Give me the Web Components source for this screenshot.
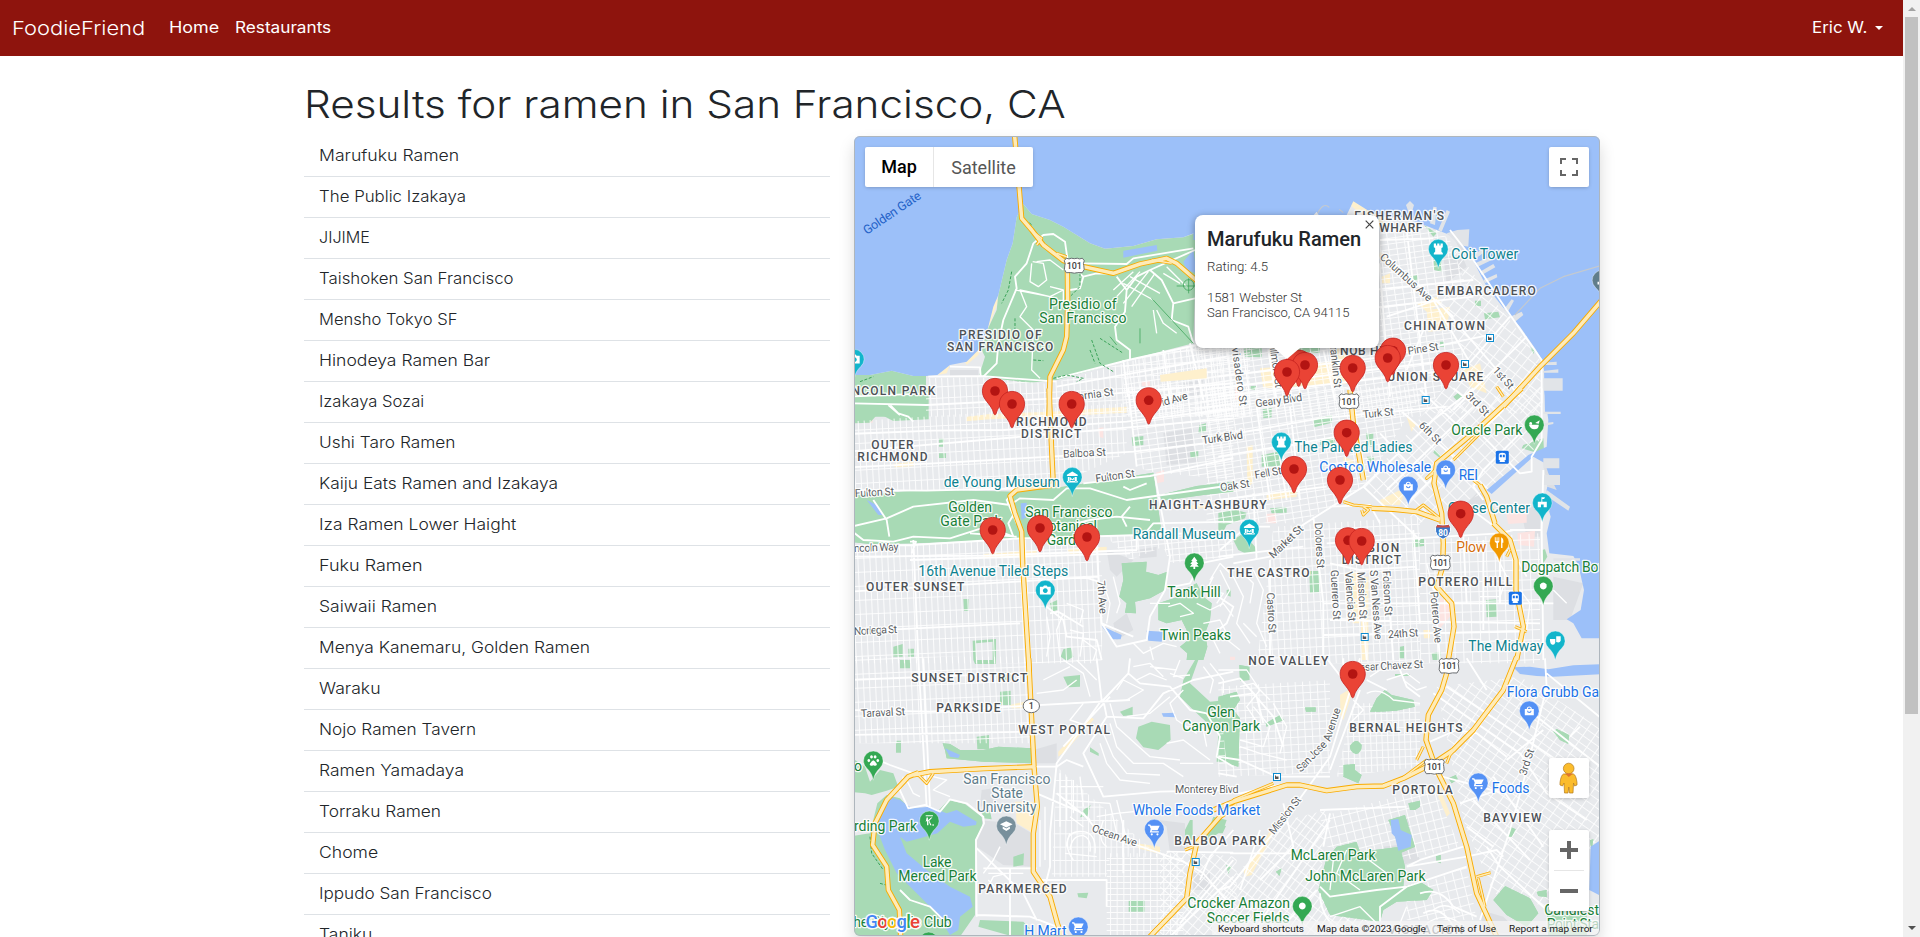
<!DOCTYPE html>
<html lang="en">
<head>
<meta charset="utf-8">
<title>FoodieFriend</title>
<style>
html,body{margin:0;height:937px;overflow:hidden;background:#fff}
body{font-family:Inter,"Open Sans",sans-serif;color:#212529}
</style>
</head>
<body>
<foodie-app></foodie-app>
<script>
const define=(n,c)=>customElements.define(n,c);
class Base extends HTMLElement{
  constructor(){super();this.attachShadow({mode:'open'});}
  paint(h){this.shadowRoot.innerHTML=h;}
}

/* Text stretched horizontally to a wanted advance width */
define('fit-text',class extends Base{
  connectedCallback(){
    this.paint(`<style>:host{display:inline-block;white-space:nowrap;width:${this.getAttribute('w')}px}span{display:inline-block;transform-origin:0 50%}</style><span><slot></slot></span>`);
    const s=this.shadowRoot.querySelector('span');
    const w=s.offsetWidth;
    if(w)s.style.transform=`scaleX(${(+this.getAttribute('w')/w).toFixed(4)})`;
  }
});

define('nav-bar',class extends Base{
  connectedCallback(){this.paint(`<style>
  :host{display:flex;height:56px;background:#8e140d;color:#fff;align-items:center;box-sizing:border-box;padding:0 20px 0 12px;font-size:15.4px;line-height:24px}
  .brand{font-size:19.3px;margin-right:24px;font-weight:350;line-height:30px}
  a{margin-right:16px;padding-bottom:1px}
  .user{margin-left:auto;display:flex;align-items:center;padding-bottom:1px}
  i{border:4.8px solid transparent;border-top-color:#fff;border-bottom:0;margin-left:8px}
  </style>
  <fit-text class="brand" w="133">FoodieFriend</fit-text><a><fit-text w="50">Home</fit-text></a><a><fit-text w="96">Restaurants</fit-text></a>
  <span class="user"><fit-text w="55">Eric W.</fit-text><i></i></span>`);}
});

define('result-row',class extends Base{
  connectedCallback(){this.paint(`<style>:host{display:block;height:24px;padding:8px 16px 8px 15.5px;border-bottom:1px solid #dee2e6;font-size:15.2px;line-height:24px;font-weight:300;color:#212529}</style><fit-text w="${this.getAttribute('w')}"><slot></slot></fit-text>`);}
});

define('result-list',class extends Base{
  connectedCallback(){
    const rows=[['Marufuku Ramen',140.5],['The Public Izakaya',147.5],['JIJIME',51],['Taishoken San Francisco',195],['Mensho Tokyo SF',138.5],['Hinodeya Ramen Bar',171],['Izakaya Sozai',105],['Ushi Taro Ramen',136.5],['Kaiju Eats Ramen and Izakaya',239.5],['Iza Ramen Lower Haight',197.5],['Fuku Ramen',103],['Saiwaii Ramen',117.5],['Menya Kanemaru, Golden Ramen',270.5],['Waraku',61.5],['Nojo Ramen Tavern',157.5],['Ramen Yamadaya',145],['Torraku Ramen',122],['Chome',59],['Ippudo San Francisco',172.5],['Taniku',53]];
    this.paint(`<style>:host{display:block}</style>`+rows.map(r=>`<result-row w="${r[1]}">${r[0]}</result-row>`).join(''));
  }
});

/* ---- city map ---- */
const TILES={A:[850,130],B:[1220,130],C:[850,390],D:[1220,390],E:[850,660],F:[1220,660]};
const px=(t,x)=>(TILES[t][0]+x/3).toFixed(1);
const py=(t,y)=>(TILES[t][1]+y/3).toFixed(1);
const layer=(cls,list)=>list.trim().split('\n').map(l=>{const t=l.trim()[0];return `<path class="${cls}" transform="translate(${TILES[t]}) scale(.33333)" d="${l.trim().slice(2)}"/>`}).join('');

const WATER=`
A M-5 -5H1200V330L1035 308L1000 322L920 328L850 348L765 356L720 340L640 290L600 270L545 252L520 222L500 262L488 340L470 390L445 495L430 530L410 610L385 660L350 695L300 705L262 735L228 738L190 738L125 722L60 735H-5Z
B M-80 -5H1150V850H975L972 720L968 692L945 655L900 590L865 552L800 470L760 392L715 335L690 315L612 285L550 262L500 262L455 248L400 214L380 255L300 262L290 245L240 300L-80 330Z
D M972 -5H1150V745H1085L1060 700L1040 688L1082 660L1092 600L1075 525L1060 498L988 490L980 430L992 380L975 320L982 290L1010 300L985 250L975 220L940 200L815 312L800 300L925 195L980 170L985 90Z
F M880 22L930 20L985 28L1060 16L1150 12V42L1000 50L950 48L900 42Z
F M1150 535L1112 560L1108 690L1150 712Z
F M512 480L535 477L542 510L575 525L572 560L535 572L525 530L515 520Z
E M115 410L150 420L185 445L240 440L290 460L320 450L380 485L378 495L340 500L300 485L262 520L210 535L170 545L150 530L170 580L230 630L300 680L360 710L368 740L330 770L325 810L300 825L260 760L200 700L140 640L105 570L82 510L80 460Z
C M755 708L815 735L812 748L785 748Z
C M890 722L940 725L935 755L895 752Z
C M512 340L530 338L528 382L515 390Z
C M50 330L80 345L98 375L85 375Z
A M820 362L920 345L922 362L820 383Z
A M1000 395L1030 360L1040 430L1010 420Z
E M935 160L975 158V172L940 170Z
E M285 265L330 285L325 294L300 290Z
`;
const GREEN=`
A M520 222L500 262L488 340L470 390L445 495L440 540L412 600L395 660L405 680L388 735L420 745L540 758L620 750L835 690L1030 640L1040 308L1000 322L920 328L850 348L765 356L720 340L640 290L600 270L545 252Z
A M-5 735H60L125 722L190 738L228 738V860H-5Z
C M-5 -5H236V88L130 93L85 70L60 98L15 100H-5Z
C M-5 315L240 300L480 305L640 290L910 248L935 430L880 432L500 447L190 460L60 462L-5 455Z
C M930 315L1040 288L1150 275V305L1060 315L935 332Z
C M815 520L890 515L888 545L925 555L952 545L945 600L900 625L855 635L858 670L825 668L830 640L808 620L820 570Z
C M925 640L985 620L1000 600L1040 580L1060 620L1085 640L1080 690L1065 730L1072 770L1060 810H1010L1012 790L990 770L1015 750L1010 720L995 690L950 700L925 690Z
C M340 627H356V663H342ZM267 146H282V170H267ZM267 190H288V204H267ZM845 142L880 138V165L848 168ZM1048 105L1068 100V125L1045 130ZM1020 186L1045 182V202L1022 204ZM368 752L438 747V810H428V755L378 760V810H370ZM130 770L158 762V800H130ZM175 776H192V800H175ZM640 778L662 772L670 800L650 812L632 800ZM600 640L622 630V660L605 665Z
E M278 250L300 252L330 270L400 270L445 260L545 265V310L400 305L290 295L285 270Z
E M380 230L417 225V268H382ZM150 0H180V25H150ZM370 0H438V12H375ZM450 40L482 35V60H450ZM450 95L482 92V135H450ZM138 242H153V278H138ZM640 50L690 45V80L655 82ZM810 155L848 140V165L820 168ZM865 200L905 185L960 195L962 240L925 270L880 262L858 235ZM720 262L746 280V288L720 275ZM700 450L722 435L712 468L690 472ZM1020 480H1028V540H1005V510ZM1090 470L1130 480L1120 510L1060 550ZM395 455L420 450L425 478L400 475ZM490 590L522 580L520 615L490 620ZM682 700L715 698L710 715L685 712ZM836 720H884V755H836ZM390 780L520 785L545 810L530 830H490L385 800Z
E M-5 300H15L45 320L60 365L90 330L130 340L145 380L110 392L65 405L45 400L-5 395Z
E M82 430L110 405L150 415L175 442L225 445L262 455L295 420L345 432L395 470L398 500L375 540V765L330 830H-5V530L60 520Z
E M1000 60L1035 0H1045L1020 70L1080 125L1130 120L1150 180V305H1100L1105 220L1030 150L990 110Z
B M640 370H665V425L642 420ZM765 512H783V528H765ZM792 550L835 545L840 562L795 568ZM572 438L592 436V452H572ZM930 650L945 660L940 672ZM70 655L125 652V682L75 680ZM92 768H108V780H92ZM660 635H672V650H660ZM220 655L300 652V668L220 670ZM612 285L650 310L640 320Z
D M128 58L155 54V82L130 85ZM125 195L175 185L188 228L125 230ZM700 20L715 8L728 20L714 35ZM645 178L665 198L660 205L640 188ZM280 88L335 75V98L282 112ZM910 165L970 145L972 180L950 188L905 175ZM268 543H298V607L270 608ZM578 450L612 446V468L580 472ZM798 630L830 628V680L800 682ZM40 450L70 430L105 470L112 485L80 492L55 480ZM540 770L552 768V805H537ZM20 600L32 598V620L20 615ZM150 355L200 352V368L155 370ZM438 130H460V170H442ZM440 200H462V240ZM-5 368L40 358L80 368L75 385L20 405L5 435H-5ZM300 150L345 145V165H300ZM635 790L662 785V810H638ZM965 480L975 478L982 500L970 520Z
F M450 155L470 115L495 90L515 105L580 120L585 140L530 152L480 155ZM370 315L405 312V330L425 345L415 370L370 350ZM390 258Q408 230 425 255Q425 280 408 282Q390 278 390 258ZM1000 215L1010 207L1048 225L1045 252L1020 240ZM58 15L88 20V60L60 62ZM-5 110L50 95L60 120L40 150L60 175L55 320L20 310L10 220L-5 210ZM137 190L180 165L192 180L140 200ZM255 142H287V155H258ZM505 480L555 465L585 560L540 580L530 540ZM565 430L600 422V440L585 450H570ZM685 355L708 345L713 358L695 370ZM870 500L887 508L875 530H865ZM648 588L662 585V610L650 605ZM168 635L185 625L178 648Z
F M318 600L350 560L410 545L420 575L505 565L540 560L555 620L550 680L600 665L640 690L620 720L530 725L490 750L480 785L330 765L295 690ZM855 678L930 715L955 760L920 800L860 765L820 720ZM950 695L980 690V712L955 708ZM980 740L1100 760V830H985ZM1110 540L1120 538L1115 580ZM525 42H570V47H525Z
F M-5 495L18 498L8 520H-5ZM18 615L35 620L25 642Z
`;
const BUILT=`
A M670 312L700 318L765 352L840 342L920 320L985 320V332L850 356L765 362L730 350ZM435 505L445 512L385 675L350 705L345 695L380 660ZM262 735L300 705L290 730Z
C M350 80L420 72L600 65L830 50V68L600 80L420 88L348 94ZM400 492L560 482V495L400 505ZM650 478L770 470V485L660 492ZM130 222L190 215V228L135 232ZM1000 348L1100 340V352L1000 358Z
E M495 425H550V520L500 490ZM480 135L522 125L520 145H485ZM625 275L722 170L732 178L650 270L625 290ZM860 550L930 560V582L865 565ZM15 640L40 760L38 830H28L14 720Z
B M620 540L690 530L680 600L625 605ZM480 365L540 420L530 430L478 385ZM360 200L455 225L500 290L470 290ZM485 440L510 430V460H485ZM590 520L650 500L665 520L620 545ZM120 715L400 690V760L130 775ZM340 655H392V760H345ZM730 720L780 700L800 790L750 770Z
D M480 330L560 290L540 345L485 345ZM140 310L230 300V320L140 330ZM395 545H420V700H398ZM420 560H445V810H425ZM560 80L590 100L575 125ZM80 170L98 165V280L82 290ZM370 200L400 210V250H372ZM610 720H630V745H612Z
F M360 105L385 90L395 105L370 180L362 170ZM70 630L120 570L150 510L160 520L95 645L75 650ZM655 375L690 460L680 470L655 410Z
`;
const PINK=`
C M-5 40H68V98L-5 100ZM745 115L760 112V145L748 140ZM918 248L942 240V275L922 280Z
D M138 372L168 370V400H140ZM855 355L920 340V398L865 402ZM892 430L945 422L942 470L895 465ZM660 620L690 645V680L655 720ZM30 800H45V810H30Z
B M45 770L70 765V810H45Z
A M875 755L900 753V768H875Z
`;
const GREY=`
A M1000 760L1060 750L1045 800L1010 795ZM300 720H385V740H300Z
C M940 130L1030 115V170L1045 215L950 225ZM790 700L830 670L850 720L800 750ZM860 480L920 470V500L870 505ZM770 480L850 510L800 560L780 540Z
E M380 480L495 490L545 520V620L460 615L380 560ZM395 390L430 385V430L390 440ZM925 480L1005 490V580H960L950 500ZM550 270L620 250V310H555ZM1030 640H1080V690H1030Z
B M690 300L745 298V370L720 360ZM670 380L725 375L740 410L680 460ZM985 745H1028V780H985ZM975 700L1015 695V712L975 715ZM640 250L680 290L640 300ZM560 215L580 215L578 250H565ZM415 215L470 260L440 260Z
D M740 340L790 290L800 340L775 365ZM900 350L960 340V440L920 440ZM1000 560L1090 580L1050 690H1000ZM970 220L1020 200V310L985 310Z
F M520 490L560 470L575 500L530 520ZM490 560L580 550L600 600L530 620ZM780 750L850 770L900 820H790Z
`;
const PIERS=`
B M630 280L640 230L650 232L645 285ZM655 300L680 240L690 245L665 305ZM680 310L712 300L748 298L745 350L718 345ZM750 380L800 350L805 358L758 392ZM765 400L810 380L815 390L770 412ZM780 425L820 402L826 412L785 435ZM790 450L830 432L832 442L795 460ZM850 540L875 508L882 512L862 548ZM870 560L905 545L910 555L885 575ZM945 700L1010 695V705H950ZM950 725L1015 718V728H955ZM970 745H1028V782H972ZM558 225L570 213L582 225L576 245H565Z
D M970 65H1022V72H970ZM970 100L1000 96V102L970 108ZM980 300L1050 350L1045 362L975 315ZM975 330L990 360L982 370ZM970 205H1018V235H970ZM970 255H1020V285H970ZM1000 505H1080V512H1000Z
`;
/* secondary streets: white polylines */
const STREETS=`
A M550 340L530 400L495 440L500 475L460 570L445 640L440 700L400 740M550 340L580 315L610 312L645 335L650 370L655 400M655 400L700 440L690 475L660 480M700 440L740 430L800 432M690 400L830 402L850 385L1030 355M800 440L830 480L825 545L795 590L800 630L840 660V690M830 480L860 440L900 420L1035 360M900 420L935 450L970 520L965 570L1015 590L1030 640M970 520L1035 505
A M620 745L835 690L1040 645M620 770L1130 680M820 690L833 800M1020 640L1060 810M940 660L960 810M-5 800L235 790M235 740L390 738L620 755M300 710L390 712L392 738
C M-5 132L250 122L460 120L830 95L1150 55M-5 40L230 45L620 25L1150 -20M-5 232L250 220L600 200L850 185L1150 150M-5 300L230 302L500 295M700 280L900 258L1150 205M-5 412L110 385L190 350L370 330L480 345L510 325L610 330L650 295L720 295L830 330L1150 285M-5 415L40 450L130 455L190 440L300 445L410 410L490 440M-5 468L190 465L510 445L880 435L1150 425M190 450L205 810M-5 500L400 497L860 480L860 435M-5 605L240 590L500 575L745 560L740 460M835 -5L860 230M120 45L145 70L175 80L190 95M240 590L500 575M-5 725L510 700M745 560L755 700L800 770L890 750L900 680L945 600L960 500L915 260M755 700L850 740M880 435L910 400L1150 395M180 510L840 490M1150 500L1050 520L1020 580L970 590M500 295L470 330L500 400M180 455H198L185 490M700 560L760 580M115 45L150 75M360 430L500 440M590 650L640 690L650 740L740 750L755 810M-5 185L1150 85
C M490 375L475 400L490 440M540 395L600 420L720 390L800 380L900 390M840 350L815 380L830 410M70 330L110 390L118 440M890 280L840 300L820 290M600 670L625 665L700 710
E M-5 150L240 155L480 140L840 120M-5 60L500 40M205 -5L230 440M220 -5L240 440M60 290L120 315L190 340L240 330M145 380L175 445L225 435L270 455L300 418L350 430L400 470L402 490L378 540L380 770M740 -5L755 120L620 310L600 520L600 620L580 700M840 -5L835 40L760 120L770 170L880 175L940 100L1030 60L1150 35M555 320H620L650 300L700 320M560 400L700 460L740 510L860 555L1000 605L1060 640L1150 745M620 400L720 480M770 170L700 280L760 410L930 395L1150 390M380 565L520 700L560 780M950 575L1150 578M1150 510L1080 590L1050 660M380 765L540 770L620 800M150 690L180 720L240 740L300 800M835 40L870 70L960 80L1020 150L1070 160L1110 230L1100 290L1150 320M400 625H560M-5 225L530 215M640 260L780 110M560 660H770V740M480 625V830M820 480V640M990 790L1150 600M960 830L1150 650
B M485 365L700 560M500 560L650 510L900 800M350 490L760 450M-5 740L500 680L830 610M-5 775L700 690M480 330L640 325M400 540L760 500M640 510L745 690M690 300L760 390L860 540L965 690V820M478 400L510 800M560 300L620 800M310 660L345 810M145 660L170 810M-5 800L700 720M870 560L730 720M920 620L700 840M965 700L830 850M610 600L560 720
D M965 -5V150L935 200V245L900 250L790 140M430 290L640 90L760 -5M430 290L240 410L150 500M430 290L600 450M620 280L480 130M700 200L540 60M760 150L600 0M820 90L700 -5M560 340L850 60M500 300L760 50M330 350L450 345L480 400M-5 140L300 85L680 50M-5 200L410 130M110 50L150 330M-5 330L320 290M280 380L310 640V810M-5 500L250 470M0 480L80 410L150 410M40 520L150 500L230 420M150 510V810M100 310L110 510M320 460L840 430L880 420M330 520L420 540L590 530M310 640L1000 640M330 690L960 700M420 580L440 810M500 540L520 810M580 420L600 700M870 420H965L970 240M965 420L970 810M965 570L990 600M770 370L850 430L920 560M790 330L760 290L790 240L900 130M-5 620L40 650L20 700L-5 720M310 735L900 725M640 560L660 810M730 440L740 640M790 450V720M840 440V640M170 140L200 330M210 50L240 330
F M420 -5L400 60L330 290L280 360L200 470L30 680L-5 690M420 90L330 330M-5 70L60 55L110 110L130 190M30 110L100 100L160 170L190 260M-5 290L60 300L170 350L330 350M-5 380L60 400L180 375M300 450L560 440M330 460L310 560M560 620L740 590L830 570L850 590M480 785V740L560 680L740 620M740 -5L800 90M630 245L710 210L770 220L860 290M975 -5L980 80L920 330L870 510L780 780M640 100L900 280L980 400L1100 480M680 80L1100 360M900 130L1140 320M820 350L970 560M760 420L930 600M740 500L820 560M540 30L560 80L600 110M300 680L330 710L470 690L560 680M90 830L330 480M160 830L290 690M30 580L220 580M120 510L60 690M190 430L220 560L120 660M560 620L600 600L730 560M320 -5L370 60M370 -5V70M-5 340L50 350M440 60L500 90M980 40L1150 180M1050 230L1080 200M860 300L970 210M630 340L780 380L850 400M720 430L860 380M300 700Q300 780 380 830M800 560L840 620L980 750M600 700Q660 680 700 740L770 770M610 760Q660 730 700 800
`;
const CURVES=`
A M545 400L540 455L565 470L590 450L580 400L548 395M495 480L600 500L640 520M640 480L600 500L560 490L510 480L530 530L510 560L550 600L545 720L570 745M560 395L600 390L640 420M600 470L640 480L640 520M790 480L850 425M800 500L870 425M820 520L895 425M845 530L915 430M840 440L930 490M820 460L910 510M940 430L990 460M950 410L1010 470M910 540L920 610M920 540L940 580L980 610
C M760 580L780 640L770 700M790 560L810 640L800 670M960 640L900 640M955 650L990 640L1030 670L990 680M1040 640L1080 660L1120 640L1150 680M1060 700L1110 690L1130 730M1090 560L1070 600L1120 610L1100 640M1110 520L1080 570M640 670L620 720L630 800M660 720L700 730L690 800M700 750L740 780L730 810M590 680L600 740L590 800M850 760L880 790L940 760L980 770M900 770L910 810M1090 750L1110 790M650 640L700 660L690 700
E M640 0L700 40L720 110M680 0L740 60M850 20L900 10L940 50M860 60L900 40L950 60M780 130L800 200L900 290L990 300M780 190L800 260L850 310L940 310L1000 350M760 220L790 290L830 340L930 345M750 250L770 310L810 360L900 370M950 250L1000 240L1080 300M1010 200L1060 210L1070 260M990 310L1090 310M700 130L660 180L720 200M650 560Q650 510 700 515Q740 520 735 580M660 570Q665 525 700 527Q725 535 720 575M645 580L740 590M660 470L700 500M900 20L980 30M990 0L970 50L1020 45M1060 20L1090 60L1080 100M1080 10L1120 60L1120 100M415 640H520M415 660L450 700L540 690M410 690L430 650L470 640M450 560L430 600L400 640M170 360L190 400L210 410M250 350L290 360L250 390L300 410M160 350L150 390M960 110L900 160L830 170M1000 90L960 130L980 180L1040 220M800 90L820 60L880 90L830 120M560 100L640 90L680 60M580 60L660 20M960 40L1000 55
E M630 340V500M650 350V480M670 360V460M690 350L700 440M630 380L760 380M640 420L780 430M780 430L800 520M800 420L830 540M740 470L800 460L900 450M670 600Q640 560 660 520M760 480Q740 540 770 560M570 480V620M585 440V600
F M-5 30L80 30L120 90L80 140L120 200L60 210M60 80L100 70L150 120M100 140L150 200L130 260L60 240M160 130L200 200L180 280M60 260L120 280L200 300M440 100Q480 80 520 120L600 130M400 120L430 150L390 190M500 60L560 40L600 70M450 50L480 30L530 20M550 60L590 90L620 80M330 770L420 740L470 790M640 750Q680 720 720 760M620 790Q680 750 730 800M560 740L540 790L580 820M340 600L330 690M380 570L350 640L420 690M420 580L500 640
D M0 520L40 560L70 620L50 700L90 760M60 540L100 580L90 640M100 540L130 600L110 700L140 770M10 740L60 780M70 700L110 740M0 540L30 600L0 650M620 520L640 600M830 500L860 560L840 620L780 620M900 600L930 640L920 720M1000 600L1040 640
`;
/* street grids: polygon area, angle, step across, step down */
const GRIDS=[
['A','M228 745L385 742L600 762L835 695L1030 650L1200 640V860H228Z',-3,18,34],
['A','M820 695L1040 645H1200V860H820Z',-9,23,18],
['B','M-60 655H480V300L640 290L690 330L740 470L640 510L740 690L600 860H-60Z',-8,25,17],
['B','M690 340L965 695V850H610L745 690L650 510L740 470Z',38,28,30],
['D','M-40 -10H620L430 290L330 350L240 400H-40Z',-9,26,18],
['C','M-5 95L830 40V190L620 285L480 300L-5 305Z',-3,18,40],
['C','M835 -10H1150V270L900 245L860 230Z',-8,27,18],
['C','M-5 470L745 440L760 600L755 820H-5Z',-2.5,18,42],
['C','M770 440L1150 420V500L960 520L940 470L840 510Z',-5,20,18],
['E','M-5 -10H545V250H-5Z',-2.5,18,42],
['D','M620 60L960 -10V150L920 210L790 310L700 350L600 400L430 290Z',45,32,30],
['D','M160 410L600 380V820H110L150 510Z',-3,19,27],
['D','M600 450L960 430V820H600Z',-2,26,30],
['F','M400 130L600 130V320L350 350Z',-2,17,22],
['F','M300 470L640 380L720 560L560 600L320 560Z',-14,24,27],
['F','M-5 700L200 480L320 450L300 690L480 800L330 840H-5Z',37,18,30],
['F','M650 80L900 50L1140 200V530L980 740L820 700L730 480Z',35,30,22],
['E','M620 320L930 590H780L770 650H605Z',0,17,40],
['E','M930 570L1160 590V840H930Z',40,22,26],
['F','M-5 80L330 60V340L-5 350Z',-3,22,22],
['E','M770 580H1000V830H770Z',0,20,18],
['F','M560 690L740 620L770 780H560Z',-14,26,27]
];
const HWY=`
A M492 -5L508 180L515 265L545 300L580 345L640 392L700 410L790 430L870 402L950 385L980 400L1040 452
A M652 405L653 520L650 620L640 660L600 740L597 860
C M597 -5L605 180L610 285L500 300L480 318L495 370L515 425L518 520L538 850
E M536 -5L552 320L562 440L550 520V635L600 710L622 790L640 840
E M190 345L240 335L400 326L555 320M205 338L175 350L110 420L75 490L68 555L110 620L115 690L148 750L152 830
E M895 835L1010 715L1020 640L1040 550L1110 470L1160 435
F M-20 450L40 425L120 400L200 375L240 375L320 392L410 380L490 378L550 355L640 310L700 270L760 210L850 90L890 -10
F M683 30L665 90L625 165L618 240L650 330L700 430L740 560L770 700L830 830
B M1150 505L1060 610L960 710L850 830
D M905 -5L770 120L650 220L642 280L665 370L670 460L668 530L650 590L695 640L702 710L685 810
D M455 355L520 358L590 365L660 390M820 400L870 450L888 510V600L910 710L890 810
D M390 0L400 100L430 270M780 285L800 320L825 400
`;
const HWY2=`
A M555 310L575 325L560 345M620 370L650 380M905 390L965 400
D M430 350L445 360L430 375L425 360M590 360L610 345L660 385M370 335L400 345L455 350M660 225L620 265L640 250M700 210L780 130M870 480L860 500M885 710L920 725M760 270L785 290
E M205 345L230 370L250 340M1005 570L1030 560M905 820L1000 725
F M40 420L160 370M520 375L620 300M680 310L690 285L740 230M610 260L590 300M770 650L812 638M775 655L795 740M860 60L850 95L800 160
B M850 800L830 770M870 810L900 770
`;
const TRAILS=`
A M690 430V470L660 500M485 425L475 480L455 520M495 565V600M550 690L580 692M610 745L650 735L700 745L680 755M750 625L820 670M720 660L735 700M545 285L535 275M30 755L70 740M725 630L750 700L790 725
E M60 530L65 580L100 630M90 670L108 675L110 645
`;
const POI={
 castle:'M-5-6h2.5v2h1.3v-2h2.4v2h1.3v-2H5v4l-1.5 1V3l1.5 1.5V6H-5V4.500L-3.500 3V-1L-5-2Z',
 museum:'M0-6L6-2.500V-1H-6V-2.500ZM-5 0h2v5h-2ZM3 0h2v5h-2ZM-6 4.500H6V6H-6ZM-2.500 0L0 2.500L2.500 0V4h-1V2.500L0 4L-1.500 2.500V4h-1Z',
 camera:'M-6-3.500h3.500l1-1.500h3l1 1.500H6V5H-6ZM0-2a2.700 2.700 0 1 0 .01 0Z',
 tree:'M0-6.500L3.500-2H2L4.500 1.500H2.500L5 4.500H1V7H-1V4.500H-5L-2.500 1.500H-4.500L-2-2H-3.500Z',
 bag:'M-5-2h2.200a2.800 2.800 0 0 1 5.600 0H5V5H-5ZM-1.500-2h3a1.500 1.500 0 0 0-3 0ZM-2.500 0a2.500 2.500 0 0 0 5 0h-1.200a1.300 1.300 0 0 1-2.600 0Z',
 cart:'M-7-5h2.500l.7 1.500H6L3.600 1.500H-2.500L-3 2.600H5V4H-5L-4-.2-5.500-3.600H-7ZM-2.800 4.700a1.200 1.200 0 1 0 .01 0ZM3.500 4.700a1.200 1.200 0 1 0 .01 0Z',
 fork:'M-5-6h1v4h1v-4h1v4h1v-4h1v5l-1.500 1.500V6h-1.500V.5L-5-1ZM2 6V-6Q5-5 4.500 0H3.500V6Z',
 paw:'M-5-2a1.500 1.800 0 1 0 .01 0ZM-2-6a1.500 1.800 0 1 0 .01 0ZM2-6a1.500 1.800 0 1 0 .01 0ZM5-2a1.500 1.800 0 1 0 .01 0ZM0-.5Q2 0 4 4Q4 6.500 0 5Q-4 6.500-4 4Q-2 0 0-.5Z',
 dot:'M0-3.800A3.800 3.800 0 1 1-.01-3.800Z',
 golf:'M-4-6H4v1H-4ZM-3-3.500H-1.500V-.5L2-3.500H3.500L0 0L2.500 5H1L-1-.5V5H-2.500V0L-4 1.500ZM3.500 4H5V5.500H3.500Z',
 arena:'M-5-1H-1V-6H3L2-4H0V-1H5V5H1.500V2H-1.500V5H-5Z',
 cap:'M0-5L7-1.500L0 2L-7-1.500ZM-4 1L0 3L4 1V3.500L0 6L-4 3.500Z',
 mask:'M-6-2H0V2Q-1 5-3 4.500Q-6 4-6-2ZM1-5H6V0Q5 3 1 1.500Z',
 ball:'M-6 0H5Q5 5 0 5Q-4 5-6 0ZM-4-3a1.600 1.600 0 1 0 .01 0ZM1-2L6-5L5-1Z',
 stack:'M-5 5V2H-3V-5H-1V2H5V5Z'
};
const PLACES=[['B',655,357,'#12b5cb','castle'],['D',184,156,'#12b5cb','castle'],['C',667,261,'#12b5cb','museum'],['D',88,417,'#12b5cb','museum'],['C',586,600,'#12b5cb','camera'],['A',13,687,'#12b5cb','camera'],['C',1033,518,'#34a853','tree'],['D',565,288,'#5491f5','bag'],['D',677,239,'#5491f5','bag'],['D',943,104,'#34a853','ball'],['D',967,338,'#12b5cb','arena'],['D',838,458,'#f29900','fork'],['D',970,588,'#34a853','dot'],['D',1006,752,'#12b5cb','mask'],['F',928,152,'#5491f5','bag'],['F',775,368,'#5491f5','cart'],['F',247,738,'#34a853','dot'],['E',70,302,'#34a853','paw'],['E',238,482,'#34a853','golf'],['E',469,497,'#78909c','cap'],['E',913,507,'#5491f5','cart'],['E',685,800,'#5491f5','cart'],['E',236,845,'#34a853','golf'],['B',1146,450,'#607d8b','stack']];
/* tile, x start, baseline, x end (y end when the last flag is set), class, text, rotation */
const LABELS=[
['A',50,315,216,'w','Golden Gate',-34],
['A',597,536,800,'g','Presidio of'],['A',568,578,830,'g','San Francisco'],
['A',327,627,575,'n','PRESIDIO OF'],['A',291,663,610,'n','SAN FRANCISCO'],['A',-10,795,256,'n','INCOLN PARK'],
['B',403,270,672,'n','FISHERMAN\'S'],['B',478,306,607,'n','WHARF'],['B',651,496,947,'n','EMBARCADERO'],['B',552,601,795,'n','CHINATOWN'],['B',360,675,530,'n','NOB HILL'],['B',502,753,790,'n','UNION SQUARE'],
['B',694,387,895,'t','Coit Tower'],
['B',478,384,625,'s','Columbus Ave',42],['B',565,674,657,'s','Pine St',-9],['B',816,722,868,'s','1st St',48],['B',735,798,795,'s','3rd St',46],['B',34,645,830,'s','ivisadero St',82,1],['B',150,655,775,'s','illmore St',82,1],['B',330,650,775,'s','ranklin St',84,1],
['D',108,52,248,'s','Geary Blvd',-8],['D',430,85,522,'s','Turk St',-6],['D',595,108,652,'s','6th St',45],['D',-6,152,70,'s','k Blvd',-8],['D',106,266,186,'s','Fell St',-10],['D',2,303,90,'s','Oak St',-8],
['C',675,32,792,'s','fornia St',-8],['C',938,48,1015,'s','id Ave',-15],['C',1058,162,1180,'s','Turk Blvd',-8],['C',640,203,768,'s','Balboa St',-3],['C',738,277,856,'s','Fulton St',-8],['C',15,321,133,'s','Fulton St',-3],['C',12,486,146,'s','ncoln Way',-2],['C',12,735,142,'s','Noriega St',-3],['C',742,572,672,'s','7th Ave',86,1],
['E',33,172,166,'s','Taraval St',-3],['E',724,514,857,'s','Ocean Ave',19],['E',975,400,1166,'s','Monterey Blvd'],
['C',498,108,710,'n','RICHMOND'],['C',513,144,694,'n','DISTRICT'],['C',64,176,191,'n','OUTER'],['C',22,213,233,'n','RICHMOND'],['C',48,603,343,'n','OUTER SUNSET'],['C',897,357,1250,'n','HAIGHT-ASHBURY'],
['C',281,290,629,'t','de Young Museum'],['C',295,365,426,'g','Golden'],['C',271,407,455,'g','Gate Park'],['C',526,380,788,'g','San Francisco'],['C',570,422,741,'g','Botanical'],['C',590,464,722,'g','Garden'],['C',205,557,655,'t','16th Avenue Tiled Steps'],['C',848,446,1157,'t','Randall Museum'],['C',952,620,1112,'g','Tank Hill'],['C',930,749,1143,'g','Twin Peaks'],
['D',223,185,578,'t','The Painted Ladies'],['D',298,246,634,'b','Costco Wholesale'],['D',716,269,774,'b','REI'],['D',694,134,907,'g','Oracle Park'],['D',683,368,930,'t','Chase Center'],['D',709,487,799,'o','Plow'],['D',904,545,1190,'g','Dogpatch Bould'],['D',745,782,970,'t','The Midway'],
['D',366,486,538,'n','MISSION'],['D',365,522,543,'n','DISTRICT'],['D',22,561,269,'n','THE CASTRO'],['D',595,588,877,'n','POTRERO HILL'],
['D',160,507,252,'s','Market St',-44],['D',284,398,536,'s','Dolores St',87,1],['D',332,540,690,'s','Guerrero St',87,1],['D',375,545,695,'s','Valencia St',86,1],['D',412,546,688,'s','Mission St',87,1],['D',450,541,750,'s','S Van Ness Ave',86,1],['D',488,542,678,'s','Folsom St',87,1],['D',631,605,760,'s','Potrero Ave',85,1],['D',140,608,730,'s','Castro St',87,1],['D',505,745,596,'s','24th St',-4],
['F',85,15,325,'n','NOE VALLEY'],['F',420,33,610,'s','esar Chavez St',-3],['F',388,216,728,'n','BERNAL HEIGHTS'],['F',517,402,698,'n','PORTOLA'],['F',790,486,965,'n','BAYVIEW'],['F',505,822,730,'n','VISITACION'],
['F',860,111,1137,'b','Flora Grubb Ga'],['F',815,399,928,'b','Foods'],['F',212,599,467,'g','McLaren Park'],['F',256,663,617,'g','John McLaren Park'],['F',973,765,1137,'g','Candlest'],['F',980,806,1137,'g','Point Sta'],
['F',242,338,322,'s','San Jose',-46],['F',330,246,362,'s','Avenue',-72],['F',162,526,245,'s','Mission St',-52],['F',918,348,943,'s','3rd St',-72],
['E',184,66,532,'n','SUNSET DISTRICT'],['E',259,156,452,'n','PARKSIDE'],['E',505,222,780,'n','WEST PORTAL'],['E',973,555,1247,'n','BALBOA PARK'],['E',385,699,650,'n','PARKMERCED'],
['E',1072,171,1155,'g','Glen'],['E',997,213,1230,'g','Canyon Park'],['E',340,372,602,'u','San Francisco'],['E',424,414,519,'u','State'],['E',380,456,560,'u','University'],['E',848,464,1231,'b','Whole Foods Market'],['E',12,512,201,'g','rding Park'],['E',218,620,304,'g','Lake'],['E',145,662,380,'g','Merced Park'],['E',10,802,305,'g','he Olympic Club'],['E',12,334,33,'g','o'],['E',523,829,650,'b','H Mart'],['E',1012,745,1320,'g','Crocker Amazon'],['E',1070,789,1318,'g','Soccer Fields']
];
const PINS=[['C',435,3],['C',486,42],['C',665,42],['C',896,31],['C',428,420],['C',570,414],['C',711,441],['B',236,698],['B',255,705],['B',201,726],['B',398,714],['B',519,662],['B',503,684],['B',678,705],['D',380,128],['D',222,237],['D',360,270],['D',722,371],['D',384,451],['D',425,453],['F',398,42]];

define('city-map',class extends Base{
  connectedCallback(){
    const pats=GRIDS.map((g,i)=>`<pattern id="p${i}" width="${g[3]}" height="${g[4]}" patternUnits="userSpaceOnUse" patternTransform="rotate(${g[2]})"><path d="M0 1.500H${g[3]}M1.500 0V${g[4]}" stroke="#fff" stroke-width="3" stroke-opacity=".85" fill="none"/></pattern>`).join('');
    const grids=GRIDS.map((g,i)=>`<path transform="translate(${TILES[g[0]]}) scale(.33333)" d="${g[1]}" fill="url(#p${i})"/>`).join('');
    const places=PLACES.map(p=>`<g transform="translate(${px(p[0],p[1])} ${py(p[0],p[2])})"><path d="M0 19.500C-1 14-3 11-6.500 7.500A9.800 9.800 0 1 1 6.500 7.500C3 11 1 14 0 19.500Z" fill="${p[3]}" stroke="#fff" stroke-opacity=".45" stroke-width=".8"/><path d="${POI[p[4]]}" fill="#fff" fill-rule="evenodd" transform="scale(.9)"/></g>`).join('');
    const labels=LABELS.map(([t,x0,y0,end,cls,str,rot=0,down])=>{
      const len=down?(end-y0)/3:(end-x0)/3/Math.cos(rot*Math.PI/180);
      const x=px(t,x0),y=py(t,y0);
      return `<text class="${cls}" x="${x}" y="${y}" textLength="${len.toFixed(1)}"${rot?` transform="rotate(${rot} ${x} ${y})"`:''}>${str}</text>`}).join('');
    const shield=(t,x,y)=>`<g transform="translate(${px(t,x)} ${py(t,y)})"><path d="M-8-7.500Q-5-6-3-7.500Q0-6.500 3-7.500Q5-6 8-7.500L10-5Q8.500-2 9.500 0Q11 4 8 7Q3 6.500 0 7.500Q-3 6.500-8 7Q-11 4-9.500 0Q-8.500-2-10-5Z" fill="#fff" stroke="#6b6f73" stroke-width="1"/><text class="r" y="3.400" text-anchor="middle">101</text></g>`;
    const transit=(t,x,y)=>`<g transform="translate(${px(t,x)} ${py(t,y)})"><rect x="-3.500" y="-3.500" width="7" height="7" fill="#fff" stroke="#0a8bd0"/><path d="M-2-1.500h1v1h2.500v2.500H-2Z" fill="#555"/></g>`;
    const train=(t,x,y)=>`<g transform="translate(${px(t,x)} ${py(t,y)})"><rect x="-6.500" y="-6.500" width="13" height="13" rx="1.500" fill="#1a73e8"/><path d="M-3.500-2.500Q-3.500-4.500 0-4.500Q3.500-4.500 3.500-2.500V2.500L2 3.500L3 4.800H-3L-2 3.500L-3.500 2.500ZM-2.500-2.500V0H-.5V-2.500ZM.5-2.500V0H2.500V-2.500Z" fill="#fff" fill-rule="evenodd"/></g>`;
    const pins=PINS.map(p=>`<g transform="translate(${(+px(p[0],p[1])-13).toFixed(1)} ${(+py(p[0],p[2])-13).toFixed(1)})"><path d="M13 .4C5.800.4.400 5.900.400 12.900C.400 20.500 5.600 23.400 9.500 30C12 34.300 11.400 36.700 13 36.700S14 34.200 16.400 30.100C20 23.800 25.600 20.600 25.600 12.900C25.600 5.900 20.200.4 13 .4Z" fill="#ea4335" stroke="#c5221f" stroke-width=".8"/><circle cx="13" cy="13" r="4.800" fill="#b31412"/></g>`).join('');
    this.paint(`<style>
    :host{display:block;position:relative;height:800px;box-sizing:border-box;border-radius:6px;overflow:hidden;background:#e8eaed;font-family:Roboto,sans-serif}
    :host::after{content:"";position:absolute;inset:0;border:1px solid #aeb6bd;border-radius:6px;pointer-events:none}
    svg{display:block}
    .water{fill:#9cc0f9}.green{fill:#a8dab5}.built{fill:#fef0cd}.pink{fill:#fce4e2}.grey{fill:#dadce0;opacity:.8}.pier{fill:#e1e4e8}
    .st,.cv,.h1,.h2,.k1,.k2,.tr,.rail{fill:none;stroke-linejoin:round;stroke-linecap:butt}
    .st{stroke:#fff;stroke-width:5.500}.cv{stroke:#fff;stroke-width:4}
    .h1{stroke:#f9ab00;stroke-width:16}.h2{stroke:#feebb8;stroke-width:10.500}
    .k1{stroke:#f9ab00;stroke-width:9}.k2{stroke:#feebb8;stroke-width:4.500}
    .tr{stroke:#2b9a4b;stroke-width:2.600;stroke-dasharray:9 5}
    .path{fill:none;stroke:#3fa65c;stroke-width:2.400}
    .rail{stroke:#c4c9cf;stroke-width:3.500}
    text{font-family:Roboto,sans-serif;paint-order:stroke;stroke:#fff;stroke-width:2.600px;stroke-linejoin:round;stroke-opacity:.9}
    .n{font-size:12px;font-weight:500;fill:#4d5156}
    .s{font-size:10.800px;fill:#5a5e63}
    .g,.t,.b,.o,.u{font-size:14px}
    .g{fill:#188038}.t{fill:#0d8290}.b{fill:#1a73e8}.o{fill:#d56e0c}.u{fill:#607d8b}
    .w{font-size:12.500px;fill:#2462c8;stroke:none}
    .r{font-size:9px;fill:#444;stroke:none;font-weight:500}
    .box{position:absolute;background:#fff;border-radius:2px;box-shadow:0 1px 4px -1px rgba(0,0,0,.3)}
    .type{left:11.500px;top:11px;height:40px;display:flex;align-items:center;font-size:18px;color:#565656}
    .type b{width:68px;text-align:center;color:#000;font-weight:500;border-right:1px solid #e6e6e6;line-height:40px}
    .type span{width:99px;text-align:center}
    .full{left:695.500px;top:11px;width:40px;height:40px}
    .peg{left:695.500px;top:622px;width:40px;height:40px}
    .zoom{left:695.500px;top:694px;width:40px;height:81px}
    .attr{position:absolute;right:0;bottom:1px;height:14px;display:flex;font-size:9.800px;line-height:15px;color:#1a1a1a}
    .attr span{background:rgba(245,245,245,.72);padding:0 6px;text-align:center;box-sizing:border-box;white-space:nowrap}
    .attr span:last-child{padding-right:8px}
    .info{position:absolute;left:341.500px;top:79px;width:184px;height:133px;box-sizing:border-box;padding:13px 12px;background:#fff;border-radius:8px;box-shadow:0 2px 7px 1px rgba(0,0,0,.3);font-size:13px;line-height:15.600px;color:#333;font-weight:300}
    .info::after{content:"";position:absolute;left:79px;top:133px;border:13px solid transparent;border-top:11px solid #fff;border-bottom:0}
    h5{margin:0 0 7px;font-size:19.800px;line-height:24px;font-weight:500;color:#212529;white-space:nowrap}
    p{margin:0 0 15px;white-space:nowrap}
    .info svg{position:absolute;right:5px;top:5px}
    </style>
    <svg width="746" height="800" viewBox="854 136 746 800"><defs>${pats}</defs>
    <rect x="850" y="130" width="760" height="810" fill="#e8eaed"/>
    ${layer('grey',GREY)}${layer('built',BUILT)}${layer('pink',PINK)}${layer('green',GREEN)}${grids}
    ${layer('green',GREEN.split('\n').filter(l=>/^C M-5 315|^C M930|^C M815|^C M925|^E M278|^F M318|^F M450/.test(l)).join('\n'))}
    ${layer('water',WATER)}${layer('pier',PIERS)}
    ${layer('cv',CURVES)}${layer('st',STREETS)}
    ${layer('rail',`B M1150 405L1030 440L960 475L885 555
B M293 250Q310 215 328 232M358 238L370 248`)}
    ${layer('tr',TRAILS)}${layer('path','A M905 505L1030 640M870 595V640M780 620L800 645M1000 465A16 16 0 1 0 1032 465A16 16 0 1 0 1000 465M980 468H1035M1016 445V490')}
    ${layer('built','A M930 735L1070 715V745L932 755Z')}
    ${layer('k1',HWY2)}${layer('h1',HWY)}${layer('k2',HWY2)}${layer('h2',HWY)}
    ${labels}
    ${shield('A',673,407)}${shield('D',387,34)}${shield('D',661,518)}${shield('F',687,18)}${shield('F',643,320)}
    <g transform="translate(${px('E',544)} ${py('E',138)})"><ellipse rx="8.200" ry="6.700" fill="#fff" stroke="#6b6f73"/><text class="r" y="3.300" text-anchor="middle">1</text></g>
    <g transform="translate(${px('D',669)} ${py('D',425)})"><path d="M-6-7.500Q0-5.500 6-7.500L7.500-4Q8.500 4 0 7.500Q-8.500 4-7.500-4Z" fill="#3c78c8" stroke="#fff"/><path d="M-5.800-7Q0-5.300 5.800-7L7-4.200H-7Z" fill="#c94a42"/><text y="4" text-anchor="middle" style="fill:#fff;stroke:none;font-size:8.500px;font-weight:700">80</text></g>
    ${transit('B',810,624)}${transit('B',735,702)}${transit('D',617,30)}${transit('D',434,741)}${transit('F',171,351)}${transit('E',1037,606)}
    ${train('D',847,202)}${train('D',886,625)}
    ${places}${pins}
    <text x="865.500" y="927.500" textLength="54.500" style="font-size:18.500px;font-weight:500;stroke-width:3px"><tspan fill="#4285f4">G</tspan><tspan fill="#ea4335">o</tspan><tspan fill="#fbbc04">o</tspan><tspan fill="#4285f4">g</tspan><tspan fill="#34a853">l</tspan><tspan fill="#ea4335">e</tspan></text>
    </svg>
    <div class="info"><svg width="9" height="9"><path d="M.7.7L8.300 8.300M8.300.7L.7 8.300" stroke="#444" stroke-width="1.200"/></svg><h5><fit-text w="154">Marufuku Ramen</fit-text></h5><p><fit-text w="61">Rating: 4.5</fit-text></p><p><fit-text w="95">1581 Webster St</fit-text><br><fit-text w="142.500">San Francisco, CA 94115</fit-text></p></div>
    <div class="box type"><b>Map</b><span>Satellite</span></div>
    <div class="box full"><svg width="40" height="40"><path d="M11 17V11H17V13H13V17ZM23 11H29V17H27V13H23ZM11 23H13V27H17V29H11ZM27 23H29V29H23V27H27Z" fill="#666"/></svg></div>
    <div class="box peg"><svg width="40" height="40"><g fill="#fbbc2c" stroke="#b37a1c" stroke-width=".7"><path d="M14.500 16H24.500Q27 17 28 24.500V27L25.500 28L24.500 25L24 35H20.500L19.800 29L19 35H15.500L15 25L13.500 28L11 27V24.500Q12 17 14.500 16Z"/><circle cx="19.700" cy="10.500" r="5.300"/></g><path d="M16 15.500H24L19.800 19Z" fill="#e0752b"/></svg></div>
    <div class="box zoom"><svg width="40" height="81"><path d="M11 18H18V11H22V18H29V22H22V29H18V22H11ZM11 59H29V63H11Z" fill="#666"/><path d="M5 40.500H35" stroke="#e6e6e6"/></svg></div>
    <div class="attr"><span><fit-text w="86">Keyboard shortcuts</fit-text></span><span><fit-text w="109">Map data ©2023 Google</fit-text></span><span><fit-text w="59">Terms of Use</fit-text></span><span><fit-text w="84">Report a map error</fit-text></span></div>`);
  }
});

define('page-scrollbar',class extends Base{
  connectedCallback(){this.paint(`<style>:host{display:flex;flex-direction:column;align-items:center;width:17px;height:937px;background:#f1f1f1}
  i{border:4px solid transparent}
  .up{border-top:0;border-bottom-color:#a3a3a3;margin:7px 0 6px}.down{border-bottom:0;border-top-color:#505050;margin:auto 0 7px}
  div{width:13px;height:697px;background:#c1c1c1}</style><i class="up"></i><div></div><i class="down"></i>`);}
});

define('foodie-app',class extends Base{
  connectedCallback(){this.paint(`<style>
  :host{display:flex;width:1920px;height:937px;overflow:hidden}
  .page{flex:1;min-width:0}
  main{width:1296px;margin:0 auto;padding-top:24px}
  h1{margin:0 0 8px;font-size:38.500px;line-height:48px;font-weight:300;color:#212529}
  .cols{display:grid;grid-template-columns:526px 746px;gap:24px}
  city-map{box-shadow:0 8px 16px rgba(0,0,0,.15)}
  </style>
  <div class="page"><nav-bar></nav-bar><main><h1><fit-text w="762">Results for ramen in San Francisco, CA</fit-text></h1>
  <div class="cols"><result-list></result-list><city-map></city-map></div></main></div><page-scrollbar></page-scrollbar>`);}
});
</script>
</body>
</html>
